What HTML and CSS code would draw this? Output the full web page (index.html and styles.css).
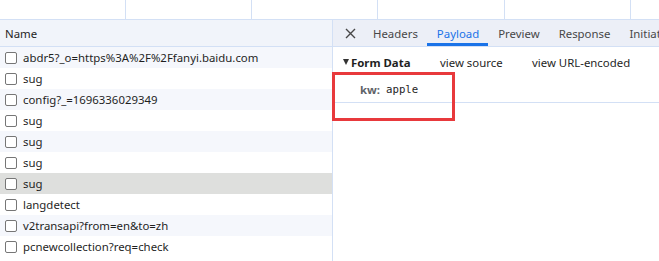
FILE: index.html
```html
<!DOCTYPE html>
<html>
<head>
<meta charset="utf-8">
<link rel="stylesheet" href="styles.css">
</head>
<body>
<div class="overview">
  <div class="ov-cell w126"></div>
  <div class="ov-cell w126"></div>
  <div class="ov-cell w126"></div>
  <div class="ov-cell w127"></div>
  <div class="ov-cell w126"></div>
  <div class="ov-cell last"></div>
</div>
<div class="main">
  <div class="left">
    <div class="lhead">Name</div>
    <div class="row odd"><span class="cb"></span>abdr5?_o=https%3A%2F%2Ffanyi.baidu.com</div>
    <div class="row"><span class="cb"></span>sug</div>
    <div class="row odd"><span class="cb"></span>config?_=1696336029349</div>
    <div class="row"><span class="cb"></span>sug</div>
    <div class="row odd"><span class="cb"></span>sug</div>
    <div class="row"><span class="cb"></span>sug</div>
    <div class="row sel"><span class="cb"></span>sug</div>
    <div class="row"><span class="cb"></span>langdetect</div>
    <div class="row odd"><span class="cb"></span>v2transapi?from=en&amp;to=zh</div>
    <div class="row"><span class="cb"></span>pcnewcollection?req=check</div>
  </div>
  <div class="right">
    <div class="tabs">
      <span class="close"><svg width="11" height="11" viewBox="0 0 11 11"><path d="M1 1L10 10M10 1L1 10" stroke="#474747" stroke-width="1.4"/></svg></span>
      <span class="tab">Headers</span>
      <span class="tab active">Payload</span>
      <span class="tab">Preview</span>
      <span class="tab">Response</span>
      <span class="tab">Initiator</span>
    </div>
    <div class="payload">
      <div class="fd-row">
        <span class="tri"></span><span class="fd-title">Form Data</span>
        <span class="link src">view source</span>
        <span class="link">view URL-encoded</span>
      </div>
      <div class="kv"><span class="key">kw:</span><span class="val">apple</span></div>
      <div class="highlight"></div>
    </div>
  </div>
</div>
</body>
</html>
```
FILE: styles.css
```css
* { box-sizing: border-box; }
html, body { margin: 0; padding: 0; background: #fff; }
body {
  width: 659px;
  height: 261px;
  overflow: hidden;
  font-family: "Segoe UI", "Noto Sans", "Open Sans", sans-serif;
  font-size: 11.4px;
  color: #202124;
}
.overview {
  display: flex;
  height: 20px;
  border-bottom: 1px solid #d3e0f5;
}
.ov-cell { border-right: 1px solid #d3e0f5; flex: none; }
.w126 { width: 126px; }
.w127 { width: 127px; }
.ov-cell.last { flex: 1; border-right: none; }
.main { display: flex; height: 241px; }
.left {
  width: 333px;
  flex: none;
  border-right: 1px solid #d3e0f5;
}
.lhead {
  height: 27px;
  background: #f1f4fa;
  border-bottom: 1px solid #d3e0f5;
  padding-left: 5px;
  display: flex;
  align-items: center;
  color: #1f1f1f;
}
.row {
  height: 21px;
  display: flex;
  align-items: center;
  padding-left: 5px;
  white-space: nowrap;
  color: #1f1f1f;
}
.row.odd { background: #f5f7fc; }
.row.sel { background: #dedfdd; }
.cb {
  width: 12px;
  height: 12px;
  border: 1.5px solid #767676;
  border-radius: 2px;
  margin-right: 6px;
  flex: none;
  background: #fff;
}
.right { flex: 1; position: relative; min-width: 0; }
.tabs {
  height: 27px;
  background: #eceff7;
  border-bottom: 1px solid #d3e0f5;
  display: flex;
  align-items: stretch;
  white-space: nowrap;
  overflow: hidden;
}
.close {
  width: 30px;
  flex: none;
  display: flex;
  align-items: center;
  padding-left: 12px;
}
.tab {
  padding: 3px 9px 0 10px;
  display: flex;
  align-items: center;
  color: #474747;
  border-bottom: 3px solid transparent;
  flex: none;
}
.tab.active {
  color: #1a73e8;
  border-bottom-color: #1a73e8;
}
.payload { position: relative; }
.fd-row {
  height: 30px;
  display: flex;
  align-items: center;
  padding-left: 10px;
  white-space: nowrap;
}
.tri {
  width: 0; height: 0;
  border-left: 3.5px solid transparent;
  border-right: 3.5px solid transparent;
  border-top: 6px solid #333;
  margin-right: 2px;
}
.fd-title { font-weight: bold; color: #1f1f1f; width: 89px; }
.link { color: #1f1f1f; }
.src { width: 92px; }
.kv {
  height: 26px;
  padding-left: 27px;
  display: flex;
  align-items: center;
  border-bottom: 1px solid #d3e0f5;
}
.key { font-weight: bold; color: #5f6368; margin-right: 6px; }
.val { font-family: "DejaVu Sans Mono", "Liberation Mono", monospace; font-size: 10.7px; color: #1f1f1f; }
.highlight {
  position: absolute;
  left: -1px;
  top: 25px;
  width: 123px;
  height: 49px;
  border: 3px solid #e8393c;
}
```
